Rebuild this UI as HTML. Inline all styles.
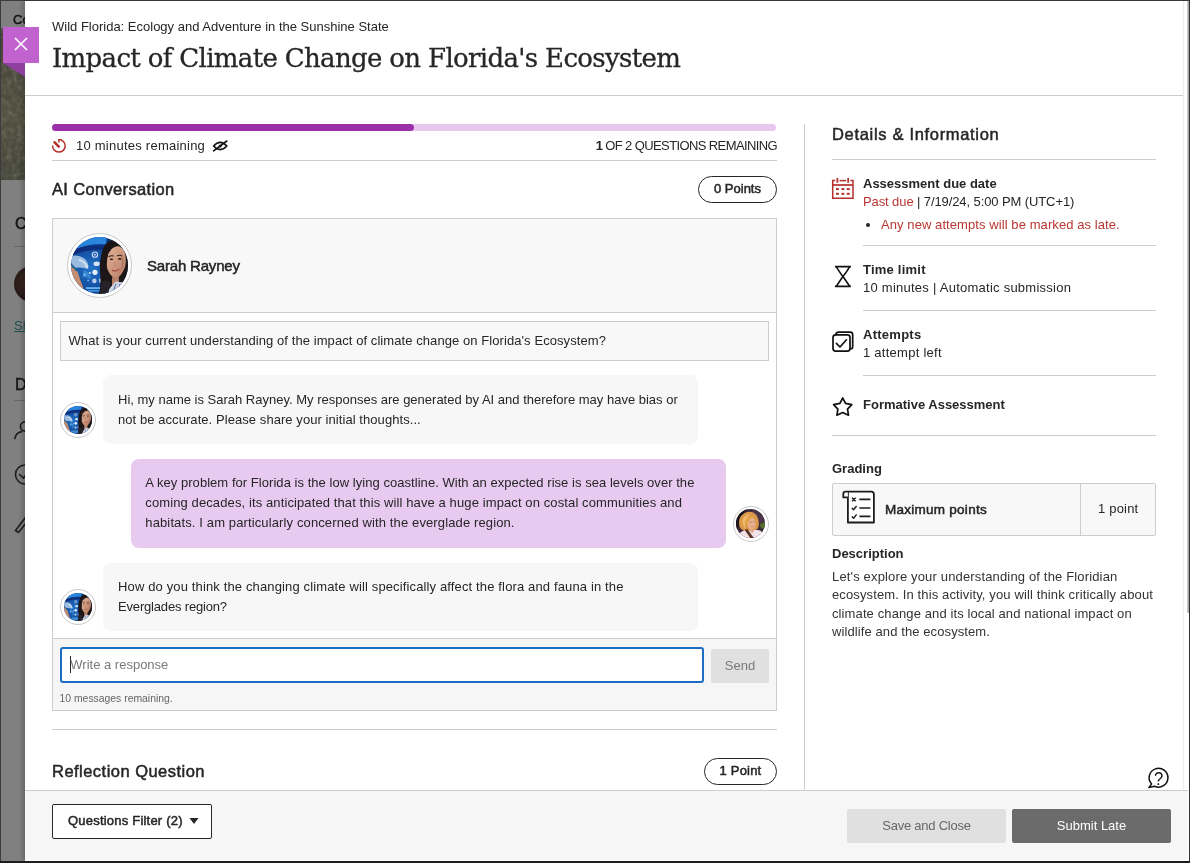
<!DOCTYPE html>
<html lang="en">
<head>
<meta charset="utf-8">
<title>Impact of Climate Change on Florida's Ecosystem</title>
<style>
*{box-sizing:border-box;margin:0;padding:0}
html,body{width:1190px;height:863px;overflow:hidden;background:#808080}
body{position:relative;font-family:"Liberation Sans","DejaVu Sans",sans-serif;font-size:13px;color:#262626;line-height:20px}
.abs{position:absolute}
.t{position:absolute;white-space:nowrap}
.b{font-weight:bold}
.ln{display:block;width:max-content}
.hl{position:absolute;height:1px;background:#cdcdcd}
.vl{position:absolute;width:1px;background:#cdcdcd}
#bg{left:0;top:0;width:1190px;height:863px;background:#808080}
#bgimg{left:1px;top:28px;width:24px;height:152px;background:linear-gradient(180deg,#46443a 0%,#4b4a3c 30%,#515142 60%,#45463a 100%)}
#edgeL{left:0;top:0;width:1px;height:863px;background:#3c3c3c}
#edgeT{left:0;top:0;width:1190px;height:1px;background:#3c3c3c}
#edgeR{left:1189px;top:0;width:1px;height:863px;background:#333}
#edgeB{left:0;top:861px;width:1190px;height:2px;background:#1c1c1c}
#panel{left:25px;top:1px;width:1164px;height:860px;background:#fff;box-shadow:-3px 0 4px rgba(0,0,0,.18)}
#sb{left:1183px;top:1px;width:6px;height:789px;background:linear-gradient(90deg,#ededed 0,#ededed 1px,#fff 1px,#fff 6px)}
#thumb{left:1187px;top:1px;width:2px;height:612px;background:linear-gradient(90deg,#c8c8c8 0,#c8c8c8 1px,#a6a6a6 1px,#a6a6a6 2px);border-radius:0 0 1px 1px}
#close{left:3px;top:27px;width:36px;height:36px;background:#c162cf}
#fold{left:3px;top:63px;width:22px;height:14px}
#title{left:52px;top:40px;font-family:"DejaVu Serif","Liberation Serif",serif;font-size:26px;line-height:36px;letter-spacing:-.66px;color:#262626;-webkit-text-stroke:.3px #262626}
.h2{font-size:16.5px;line-height:24px;color:#262626;-webkit-text-stroke:.5px #262626}
.sb{-webkit-text-stroke:.5px #262626}
.pill{position:absolute;border:1.5px solid #262626;border-radius:14px;height:27px;text-align:center;line-height:24px;background:#fff;-webkit-text-stroke:.5px #262626}
#chat{left:52px;top:218px;width:725px;height:493px;border:1px solid #cdcdcd;background:#fff}
#chathead{left:53px;top:219px;width:723px;height:94px;background:#f8f8f8;border-bottom:1px solid #cdcdcd}
#qbox{left:60px;top:321px;width:709px;height:40px;border:1px solid #cdcdcd;background:#f8f8f8}
.bub{position:absolute;border-radius:8px;background:#f8f7f8}
.ubub{background:#e8caf0}
#chatfoot{left:53px;top:638px;width:723px;height:72px;background:#f6f6f6;border-top:1px solid #cdcdcd}
#input{left:60px;top:647px;width:644px;height:36px;border:2px solid #1b6ec2;border-radius:3px;background:#fff}
.btn{position:absolute;border-radius:2px;text-align:center}
#footer{left:25px;top:790px;width:1163px;height:70px;background:#f6f6f6;border-top:1px solid #cdcdcd}
#filter{left:52px;top:804px;width:160px;height:35px;border:1px solid #262626;border-radius:2px;background:#fff}
.red{color:#b93632}
.av{border-radius:50%;border:1px solid #c9c9c9;background:#fff}
#gbox{left:832px;top:483px;width:324px;height:53px;border:1px solid #cdcdcd;border-radius:2px;background:#f8f8f8}
</style>
</head>
<body>
<div id="root" style="position:absolute;left:0;top:0;width:1190px;height:863px;will-change:transform">
<div class="abs" id="bg"></div>
<div class="abs" id="bgimg"></div>
<svg class="abs" style="left:1px;top:28px" width="24" height="152"><filter id="nz" x="0" y="0" width="100%" height="100%"><feTurbulence type="fractalNoise" baseFrequency=".18" numOctaves="3" seed="4"/><feColorMatrix type="matrix" values="0 0 0 0 .55  0 0 0 0 .55  0 0 0 0 .45  1.4 0 0 0 -.55"/></filter><rect width="24" height="152" filter="url(#nz)" opacity=".32"/></svg>

<div class="t" style="left:13px;top:9.6px;color:#111;font-size:13px;-webkit-text-stroke:.4px #111">Course Content</div>
<div class="t" style="left:15px;top:212px;color:#141414;font-size:16px;line-height:24px;-webkit-text-stroke:.5px #141414">Course Faculty</div>
<div class="hl" style="left:14px;top:246px;width:20px;background:#666"></div>
<div class="abs" style="left:14px;top:266px;width:36px;height:36px;border-radius:18px;background:radial-gradient(circle at 50% 45%,#4a3228 0,#2a1c18 60%,#1c1412 100%)"></div>
<div class="t" style="left:14px;top:316px;color:#1e4e52;text-decoration:underline">Show All</div>
<div class="t" style="left:15px;top:373px;color:#141414;font-size:16px;line-height:24px;-webkit-text-stroke:.5px #141414">Details &amp; Actions</div>
<div class="hl" style="left:14px;top:400px;width:20px;background:#666"></div>
<svg class="abs" style="left:10px;top:415px" width="30" height="125" viewBox="10 415 30 125" fill="none" stroke="#1c1c1c" stroke-width="1.6" stroke-linecap="round">
<circle cx="25" cy="426.5" r="4.6"/><path d="M14.8 438.5 C15.5 434.5 18 432.3 21.5 431.6"/>
<circle cx="25" cy="474.5" r="9.5"/><path d="M19.5 474.5 L23.5 478 L29 471"/>
<path d="M15.5 530.5 L27 515.5 L30 518 L18.5 532.5 Z"/>
</svg>
<div class="abs" id="edgeL"></div>
<div class="abs" id="edgeT"></div>
<div class="abs" id="panel"></div>
<div class="abs" id="sb"></div>
<div class="abs" id="thumb"></div>

<!-- header -->
<div class="t" style="left:52px;top:17px">Wild Florida: Ecology and Adventure in the Sunshine State</div>
<div class="t" id="title">Impact of Climate Change on Florida's Ecosystem</div>
<div class="hl" style="left:25px;top:95px;width:1158px"></div>

<!-- close button -->
<svg class="abs" id="fold" viewBox="0 0 22 14"><polygon points="0,0 22,0 22,14" fill="#8f3f9f"/></svg>
<div class="abs" id="close"></div>
<svg class="abs" style="left:14.2px;top:37.4px" width="14" height="14" viewBox="0 0 14 14"><path d="M1 1 L13 13 M13 1 L1 13" stroke="#fff" stroke-width="1.6" fill="none"/></svg>

<!-- progress -->
<div class="abs" style="left:52px;top:124px;width:724px;height:7px;border-radius:4px;background:#e9c8f0"></div>
<div class="abs" style="left:52px;top:124px;width:362px;height:7px;border-radius:4px;background:#9b30a8"></div>
<div class="t" style="left:76px;top:136.3px;letter-spacing:.24px">10 minutes remaining</div>
<div class="t" style="right:413px;top:135.6px;font-size:13px;letter-spacing:-.61px"><span class="b">1</span> OF 2 QUESTIONS REMAINING</div>
<div class="hl" style="left:52px;top:160px;width:725px"></div>

<div class="t h2" style="left:52px;top:177.2px;letter-spacing:.34px">AI Conversation</div>
<div class="pill" style="left:698px;top:176px;width:79px">0 Points</div>

<!-- chat -->
<div class="abs" id="chat"></div>
<div class="abs" id="chathead"></div>
<div class="t sb" style="left:147px;top:254px;font-size:15px;line-height:24px;letter-spacing:-.19px">Sarah Rayney</div>
<div class="abs" id="qbox"></div>
<div class="t" style="left:68.5px;top:331px;letter-spacing:.075px">What is your current understanding of the impact of climate change on Florida's Ecosystem?</div>

<div class="bub" style="left:102.5px;top:374.5px;width:595.5px;height:69.5px"></div>
<div class="t" style="left:118px;top:390px"><span class="ln">Hi, my name is Sarah Rayney. My responses are generated by AI and therefore may have bias or</span><span class="ln" style="letter-spacing:0.067px">not be accurate. Please share your initial thoughts...</span></div>

<div class="bub ubub" style="left:131px;top:459px;width:595px;height:89px"></div>
<div class="t" style="left:145.3px;top:473px"><span class="ln" style="letter-spacing:0.044px">A key problem for Florida is the low lying coastline. With an expected rise is sea levels over the</span><span class="ln" style="letter-spacing:0.109px">coming decades, its anticipated that this will have a huge impact on costal communities and</span><span class="ln" style="letter-spacing:0.125px">habitats. I am particularly concerned with the everglade region.</span></div>

<div class="bub" style="left:102.5px;top:563px;width:595.5px;height:67.5px"></div>
<div class="t" style="left:118px;top:577px"><span class="ln" style="letter-spacing:0.137px">How do you think the changing climate will specifically affect the flora and fauna in the</span><span class="ln" style="letter-spacing:-0.174px">Everglades region?</span></div>

<div class="abs" id="chatfoot"></div>
<div class="abs" id="input"></div>
<div class="abs" style="left:70px;top:656px;width:1px;height:17px;background:#262626"></div>
<div class="t" style="left:70.3px;top:655px;color:#7a7a7a">Write a response</div>
<div class="btn" style="left:711px;top:649px;width:58px;height:34px;background:#e0e0e0;color:#7a7a7a;line-height:34px">Send</div>
<div class="t" style="left:59.5px;top:689px;font-size:10.4px;color:#666">10 messages remaining.</div>

<div class="hl" style="left:52px;top:729px;width:725px"></div>
<div class="t h2" style="left:52px;top:759.4px;letter-spacing:.47px">Reflection Question</div>
<div class="pill" style="left:704px;top:758px;width:73px;letter-spacing:.2px">1 Point</div>

<!-- right column -->
<div class="vl" style="left:804px;top:124px;height:666px"></div>
<div class="t h2" style="left:832px;top:122.2px;letter-spacing:.68px">Details &amp; Information</div>
<div class="hl" style="left:832px;top:159px;width:324px"></div>

<div class="t b" style="left:863px;top:174px">Assessment due date</div>
<div class="t" style="left:863px;top:192px;letter-spacing:-.1px"><span class="red">Past due</span> | 7/19/24, 5:00 PM (UTC+1)</div>
<div class="abs" style="left:865.7px;top:223px;width:4.4px;height:4.4px;border-radius:2.2px;background:#262626"></div>
<div class="t red" style="left:881px;top:215px;letter-spacing:.08px">Any new attempts will be marked as late.</div>
<div class="hl" style="left:863px;top:245px;width:293px"></div>

<div class="t b" style="left:863px;top:260px;letter-spacing:.23px">Time limit</div>
<div class="t" style="left:863px;top:278.3px;letter-spacing:.25px">10 minutes | Automatic submission</div>
<div class="hl" style="left:863px;top:310px;width:293px"></div>

<div class="t b" style="left:863px;top:324.8px;letter-spacing:.26px">Attempts</div>
<div class="t" style="left:863px;top:342.5px;letter-spacing:.26px">1 attempt left</div>
<div class="hl" style="left:863px;top:375px;width:293px"></div>

<div class="t b" style="left:863px;top:395px">Formative Assessment</div>
<div class="hl" style="left:832px;top:435px;width:324px"></div>

<div class="t b" style="left:832px;top:459px">Grading</div>
<div class="abs" id="gbox"></div>
<div class="vl" style="left:1080px;top:484px;height:51px"></div>
<div class="t sb" style="left:885px;top:500px;font-size:13.5px;letter-spacing:.26px">Maximum points</div>
<div class="t" style="left:1098px;top:499.2px;letter-spacing:.2px">1 point</div>

<div class="t b" style="left:832px;top:544.2px">Description</div>
<div class="t" style="left:832px;top:567.9px;line-height:18.5px;color:#333"><span class="ln" style="letter-spacing:0.155px">Let's explore your understanding of the Floridian</span><span class="ln" style="letter-spacing:0.128px">ecosystem. In this activity, you will think critically about</span><span class="ln" style="letter-spacing:0.111px">climate change and its local and national impact on</span><span class="ln" style="letter-spacing:0.098px">wildlife and the ecosystem.</span></div>



<!-- avatars -->
<svg width="0" height="0" style="position:absolute">
<defs>
<radialGradient id="gsky" cx="35%" cy="55%" r="70%"><stop offset="0" stop-color="#2173c8"/><stop offset=".55" stop-color="#114a9c"/><stop offset="1" stop-color="#0a2a68"/></radialGradient>
<linearGradient id="gface" x1="0" y1="0" x2="1" y2="1"><stop offset="0" stop-color="#e3b498"/><stop offset="1" stop-color="#b97e66"/></linearGradient>
<clipPath id="cav"><circle cx="50" cy="50" r="50"/></clipPath>
<filter id="bl" x="-20%" y="-20%" width="140%" height="140%"><feGaussianBlur stdDeviation="1.1"/></filter>
<symbol id="sarah" viewBox="0 0 100 100">
<g clip-path="url(#cav)">
<rect width="100" height="100" fill="url(#gsky)"/>
<g filter="url(#bl)">
<path d="M8 0 H62 V13 Q36 10 6 22 Z" fill="#2b86dc"/>
<path d="M4 22 Q34 12 60 15 V23 Q34 20 2 32 Z" fill="#0b2f7a"/>
<path d="M0 34 Q12 30 24 38 Q32 46 30 56 Q18 52 8 54 Q2 50 0 44 Z" fill="#a9c6e4" opacity=".9"/>
<path d="M14 40 Q24 42 28 52" stroke="#e4eef8" stroke-width="3" fill="none" opacity=".8"/>
<path d="M22 58 Q32 60 36 74 Q28 70 20 70 Z" fill="#3f8fda" opacity=".8"/>
<circle cx="28" cy="52" r="2.2" fill="#d8e8f8"/><circle cx="33" cy="63" r="1.8" fill="#cfe2f5"/><circle cx="24" cy="66" r="1.6" fill="#b6d4f2"/><circle cx="30" cy="76" r="1.5" fill="#9cc4ee"/>
<circle cx="42" cy="31" r="4.6" fill="none" stroke="#c9dcf2" stroke-width="2"/><circle cx="42" cy="31" r="1.6" fill="#dfeaf6"/>
<ellipse cx="45" cy="47" rx="5.5" ry="4" fill="#d3e4f6"/>
<circle cx="42" cy="62" r="4.6" fill="#e6edf6"/>
<circle cx="41" cy="77" r="4" fill="#b9cde8"/><rect x="49" y="73" width="5" height="7" fill="#9fb6dc"/>
<rect x="26" y="88" width="30" height="3.4" fill="#63b6f0"/><rect x="30" y="93" width="26" height="3" fill="#3f8fda"/>
<path d="M-2 50 Q8 52 12 62 Q16 76 22 90 L10 98 L-6 74 Z" fill="#c38d6f"/>
<path d="M2 52 Q8 54 10 60" stroke="#2a6a8c" stroke-width="3" fill="none"/>
<path d="M48 104 Q54 84 51 62 Q49 32 60 13 Q72 1 88 6 Q104 18 102 50 Q102 84 92 104 Z" fill="#1a1316"/>
<path d="M62 26 Q72 9 90 17 Q99 32 95 52 Q88 70 78 74 Q66 67 62 50 Q59 36 62 26 Z" fill="url(#gface)"/>
<path d="M59 40 Q59 16 80 9 Q98 12 100 36 Q94 20 83 16 Q72 17 66 28 Q62 40 63 54 Q59 50 59 40 Z" fill="#1a1316"/>
<path d="M66 35 Q70 31.5 75 33.5 M81 33 Q86 30.5 90 33.5" stroke="#2a1a18" stroke-width="1.8" fill="none"/>
<ellipse cx="71" cy="39" rx="2.8" ry="1.5" fill="#2a1c1c"/><ellipse cx="85.5" cy="38.5" rx="2.8" ry="1.5" fill="#2a1c1c"/>
<path d="M72 58 Q78 62 85 56" stroke="#a8524c" stroke-width="2.4" fill="none"/><path d="M77 44 Q76 50 78 52" stroke="#b07c64" stroke-width="1.4" fill="none"/>
<path d="M86 30 Q92 40 88 56 Q84 66 78 70 Q90 62 92 46 Q93 36 86 30 Z" fill="#8a5a48" opacity=".55"/>
<path d="M72 70 Q78 76 84 66 L84 82 L72 86 Z" fill="#b98268"/>
<path d="M66 92 L78 78 L92 80 L96 104 L62 104 Z" fill="#cfd5e6"/>
<path d="M72 102 L79 82 M80 102 L86 82 M88 102 L91 84" stroke="#6a7aa6" stroke-width="2"/>
<path d="M50 104 L54 78 Q62 74 70 80 L64 104 Z" fill="#26242a"/>
</g>
</g>
</symbol>
<symbol id="user" viewBox="0 0 100 100">
<g clip-path="url(#cav)">
<rect width="100" height="100" fill="#3b2a3a"/>
<g filter="url(#bl)">
<path d="M0 0 H40 Q14 20 10 60 L0 80 Z" fill="#1f181e"/>
<path d="M82 52 L100 46 L100 68 L86 66 Z" fill="#55702f"/>
<path d="M56 2 Q90 8 100 40 L84 52 Q74 28 54 18 Z" fill="#4a3448"/>
<circle cx="70" cy="22" r="2" fill="#6a506a"/><circle cx="84" cy="34" r="2" fill="#5e4660"/><circle cx="62" cy="12" r="1.6" fill="#66506a"/>
<path d="M12 60 Q4 30 30 14 Q56 2 72 24 Q84 46 76 66 Q60 80 40 76 Q20 76 12 60 Z" fill="#dc9848"/>
<path d="M22 40 Q28 20 48 16 Q36 26 32 44 Q30 58 34 68 Q22 58 22 40 Z" fill="#eebb6c"/>
<path d="M40 36 Q52 24 66 36 Q72 54 62 68 Q52 74 44 66 Q36 52 40 36 Z" fill="#e8b08c"/>
<path d="M36 34 Q48 18 66 28 Q54 28 46 38 Q40 50 40 62 Q32 50 36 34 Z" fill="#e4a450"/>
<path d="M48 46 Q51 44 54 46 M60 45 Q63 43.5 66 45.5" stroke="#6a4030" stroke-width="1.6" fill="none"/>
<path d="M52 60 Q57 63 63 59" stroke="#c06860" stroke-width="2" fill="none"/>
<path d="M8 88 Q28 68 46 74 L60 72 Q82 68 98 86 L92 104 L10 104 Z" fill="#f3e2e7"/>
<path d="M46 72 L56 84 L64 70 Q56 76 46 72 Z" fill="#d9a284"/>
<path d="M30 72 L39 68 L64 104 L52 104 Z" fill="#5a3424"/>
</g>
</g>
</symbol>
</defs>
</svg>
<div class="abs av" style="left:67px;top:233px;width:65px;height:65px"></div>
<svg class="abs" style="left:71px;top:237px" width="57" height="57"><use href="#sarah"/></svg>
<div class="abs av" style="left:60px;top:402px;width:36px;height:36px"></div>
<svg class="abs" style="left:64px;top:406px" width="28" height="28"><use href="#sarah"/></svg>
<div class="abs av" style="left:60px;top:588.5px;width:36px;height:36px"></div>
<svg class="abs" style="left:64px;top:592.5px" width="28" height="28"><use href="#sarah"/></svg>
<div class="abs av" style="left:732.8px;top:505.8px;width:36px;height:36px"></div>
<svg class="abs" style="left:735.8px;top:508.8px" width="29" height="29"><use href="#user"/></svg>

<!-- icons -->
<svg class="abs" style="left:50px;top:137px" width="18" height="18" viewBox="50 137 18 18" fill="none" stroke="#b5302c" stroke-width="1.5">
<path d="M58.9 139.5 A6.3 6.3 0 1 1 52.6 145.4"/><path d="M58.9 139 V142.6"/><path d="M54.6 142.3 L58.8 146.6" stroke-width="2.6" stroke-linecap="round"/>
</svg>
<svg class="abs" style="left:211px;top:138px" width="18" height="16" viewBox="211 138 18 16" fill="none" stroke="#111" stroke-width="1.6" stroke-linecap="round">
<path d="M213.6 146 Q220.2 138.8 226.8 146 Q220.2 153.2 213.6 146 Z"/><circle cx="220.2" cy="146" r="1.5" fill="#111" stroke="none"/><path d="M213.6 150.8 L226.8 141"/>
</svg>
<svg class="abs" style="left:830px;top:176px" width="26" height="25" viewBox="830 176 26 25" fill="none" stroke="#b5302c" stroke-width="1.5">
<path d="M835.2 180.6 H832.7 V198.2 H853 V180.6 H850.4"/><path d="M839.6 180.6 H846"/><path d="M832.7 185 H853" stroke-width="1.7"/>
<path d="M837.4 178 V182.8 M848.2 178 V182.8" stroke-width="1.8"/>
<g fill="#b5302c" stroke="none"><rect x="836" y="188.1" width="2.9" height="2"/><rect x="841.4" y="188.1" width="2.9" height="2"/><rect x="846.8" y="188.1" width="2.9" height="2"/><rect x="836" y="192.8" width="2.9" height="2"/><rect x="841.4" y="192.8" width="2.9" height="2"/><rect x="846.8" y="192.8" width="2.9" height="2"/></g>
</svg>
<svg class="abs" style="left:832px;top:264px" width="22" height="25" viewBox="832 264 22 25" fill="none" stroke="#111" stroke-width="1.6" stroke-linejoin="round">
<path d="M834.9 266.6 H850.9 M834.9 286.4 H850.9"/><path d="M836.4 266.8 Q840.5 273.5 842.9 276.5 Q845.5 280 849.6 286.2 M849.6 266.8 Q845.5 273.5 842.9 276.5 Q840.5 280 836.4 286.2"/>
</svg>
<svg class="abs" style="left:830px;top:329px" width="26" height="25" viewBox="830 329 26 25" fill="none" stroke="#111" stroke-width="1.7" stroke-linejoin="round" stroke-linecap="round">
<rect x="833" y="334.8" width="17" height="16.4" rx="2.6"/><path d="M835.8 334.6 Q836.2 332.2 838.5 332.2 H850 Q852.7 332.2 852.7 334.8 V346.5 Q852.7 348.8 850.4 349"/><path d="M836.4 343.4 L840 347 L846.4 339.8"/>
</svg>
<svg class="abs" style="left:830px;top:395px" width="26" height="24" viewBox="830 395 26 24" fill="none" stroke="#111" stroke-width="1.7" stroke-linejoin="round">
<path d="M842.7 398 L845.5 403.4 L851.8 404.6 L847.5 409.1 L848.5 415.2 L842.7 412.5 L836.9 415.2 L837.9 409.1 L833.6 404.6 L839.9 403.4 Z"/>
</svg>
<svg class="abs" style="left:840px;top:488px" width="38" height="38" viewBox="840 488 38 38" fill="none" stroke="#1c1c1c" stroke-width="1.8" stroke-linejoin="round">
<path d="M847.9 491.6 H871.2 Q873.9 491.6 873.9 494.3 V522.5 H847.9 Z" fill="#fff"/><path d="M847.9 491.6 H845.6 Q843.3 491.6 843.3 493.9 V497.4 H847.9" fill="#fff"/>
<path d="M859.4 499.4 H870.4 M859.4 508 H870.4 M859.4 516.4 H870.4" stroke-width="1.6"/>
<path d="M852 497.7 L855.6 501.3 M855.6 497.7 L852 501.3 M851.8 508 L853.6 509.8 L856.6 506 M851.8 516.4 L853.6 518.2 L856.6 514.4" stroke-width="1.4"/>
</svg>
<svg class="abs" style="left:1146px;top:765px" width="26" height="26" viewBox="1146 765 26 26" fill="none" stroke="#111" stroke-width="1.5" stroke-linejoin="round">
<path d="M1151.6 784 A9.4 9.4 0 1 1 1154.6 786.2 L1148.8 787.6 Z"/>
<text x="1158.6" y="784.6" text-anchor="middle" font-family="Liberation Sans, sans-serif" font-size="18.5" fill="#111" stroke="none" transform="translate(1158.6 0) scale(.9 1) translate(-1158.6 0)">?</text>
</svg>

<!-- footer -->
<div class="abs" id="footer"></div>
<div class="abs" id="filter"></div>
<div class="t sb" style="left:68px;top:811px;letter-spacing:.21px">Questions Filter (2)</div>
<svg class="abs" style="left:189px;top:818px" width="10" height="6" viewBox="0 0 10 6"><polygon points="0.5,0 9.5,0 5,6" fill="#262626"/></svg>
<div class="btn" style="left:847px;top:809px;width:159px;height:34px;background:#e0e0e0;color:#666;line-height:34px;letter-spacing:-.25px">Save and Close</div>
<div class="btn" style="left:1012px;top:809px;width:159px;height:34px;background:#6b6b6b;color:#fff;line-height:34px">Submit Late</div>

<div class="abs" id="edgeR"></div>
<div class="abs" id="edgeB"></div>
</div>
</body>
</html>
